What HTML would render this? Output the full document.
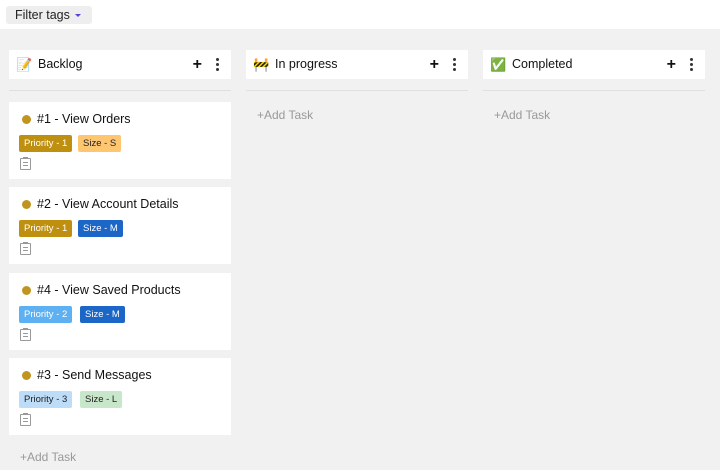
<!DOCTYPE html>
<html><head><style>
*{box-sizing:border-box;margin:0;padding:0}
body{width:720px;height:470px;background:#f1f1f1;font-family:"Liberation Sans",sans-serif;position:relative;overflow:hidden;color:#111}
.top{position:absolute;left:0;top:0;width:720px;height:29px;background:#fff}
.filter{position:absolute;left:6px;top:6px;width:86px;height:18px;background:#eee;border-radius:3px;font-size:12.5px;line-height:18px;padding-left:9px;color:#222}
.filter i{position:absolute;left:69px;top:8px;border-left:3px solid transparent;border-right:3px solid transparent;border-top:3px solid #5b3fd8}
.col{position:absolute;top:50px;width:222px}
.hd{height:29px;background:#fff;position:relative;font-size:12.5px;line-height:29px;padding-left:29px}
.hd .em{position:absolute;left:7px;top:0;font-size:13px}
.hd .plus{position:absolute;right:29px;top:0;font-size:16px;font-weight:bold}
.hd .dots{position:absolute;right:12px;top:8px;width:3px}
.hd .dots b{display:block;width:3px;height:3px;background:#333;border-radius:50%;margin-bottom:2px}
.div{position:absolute;top:40px;left:0;width:222px;height:1px;background:#e0e0e0}
.add{position:absolute;font-size:12px;color:#999}
.card{position:absolute;left:9px;width:222px;height:77px;background:#fff}
.card .t{position:absolute;left:28px;top:10px;font-size:12.5px}
.card .dot{position:absolute;left:13px;top:13px;width:9px;height:9px;border-radius:50%;background:#c0941f}
.tag{position:absolute;top:33px;height:17px;font-size:9.5px;line-height:17px;padding:0 5px;border-radius:2px}
.clip{position:absolute;left:11px;top:56px;width:11px;height:12px;border:1px solid #999;border-radius:1px}
.clip:before{content:"";position:absolute;left:2px;top:3px;width:5px;height:1px;background:#999;box-shadow:0 3px 0 #999}
.clip:after{content:"";position:absolute;left:2px;top:-2px;width:5px;height:2px;background:#999}
</style></head><body>
<div class="top"><div class="filter">Filter tags<i></i></div></div>

<div class="col" style="left:9px"><div class="hd"><span class="em">📝</span>Backlog<span class="plus">+</span><span class="dots"><b></b><b></b><b></b></span></div><div class="div"></div></div>
<div class="col" style="left:246px"><div class="hd"><span class="em">🚧</span>In progress<span class="plus">+</span><span class="dots"><b></b><b></b><b></b></span></div><div class="div"></div><div class="add" style="left:11px;top:58px">+Add Task</div></div>
<div class="col" style="left:483px"><div class="hd"><span class="em">✅</span>Completed<span class="plus">+</span><span class="dots"><b></b><b></b><b></b></span></div><div class="div"></div><div class="add" style="left:11px;top:58px">+Add Task</div></div>

<div class="card" style="top:102px"><span class="dot"></span><span class="t">#1 - View Orders</span>
<span class="tag" style="left:10px;background:#bf900f;color:#fff">Priority - 1</span><span class="tag" style="left:69px;background:#ffc672;color:#222">Size - S</span><span class="clip"></span></div>
<div class="card" style="top:187px"><span class="dot"></span><span class="t">#2 - View Account Details</span>
<span class="tag" style="left:10px;background:#bf900f;color:#fff">Priority - 1</span><span class="tag" style="left:69px;background:#1b66c6;color:#fff">Size - M</span><span class="clip"></span></div>
<div class="card" style="top:273px"><span class="dot"></span><span class="t">#4 - View Saved Products</span>
<span class="tag" style="left:10px;background:#5db0f2;color:#fff">Priority - 2</span><span class="tag" style="left:71px;background:#1b66c6;color:#fff">Size - M</span><span class="clip"></span></div>
<div class="card" style="top:358px"><span class="dot"></span><span class="t">#3 - Send Messages</span>
<span class="tag" style="left:10px;background:#bcdcf8;color:#222">Priority - 3</span><span class="tag" style="left:71px;background:#c8e6c9;color:#222">Size - L</span><span class="clip"></span></div>
<div class="add" style="left:20px;top:450px">+Add Task</div>
</body></html>
